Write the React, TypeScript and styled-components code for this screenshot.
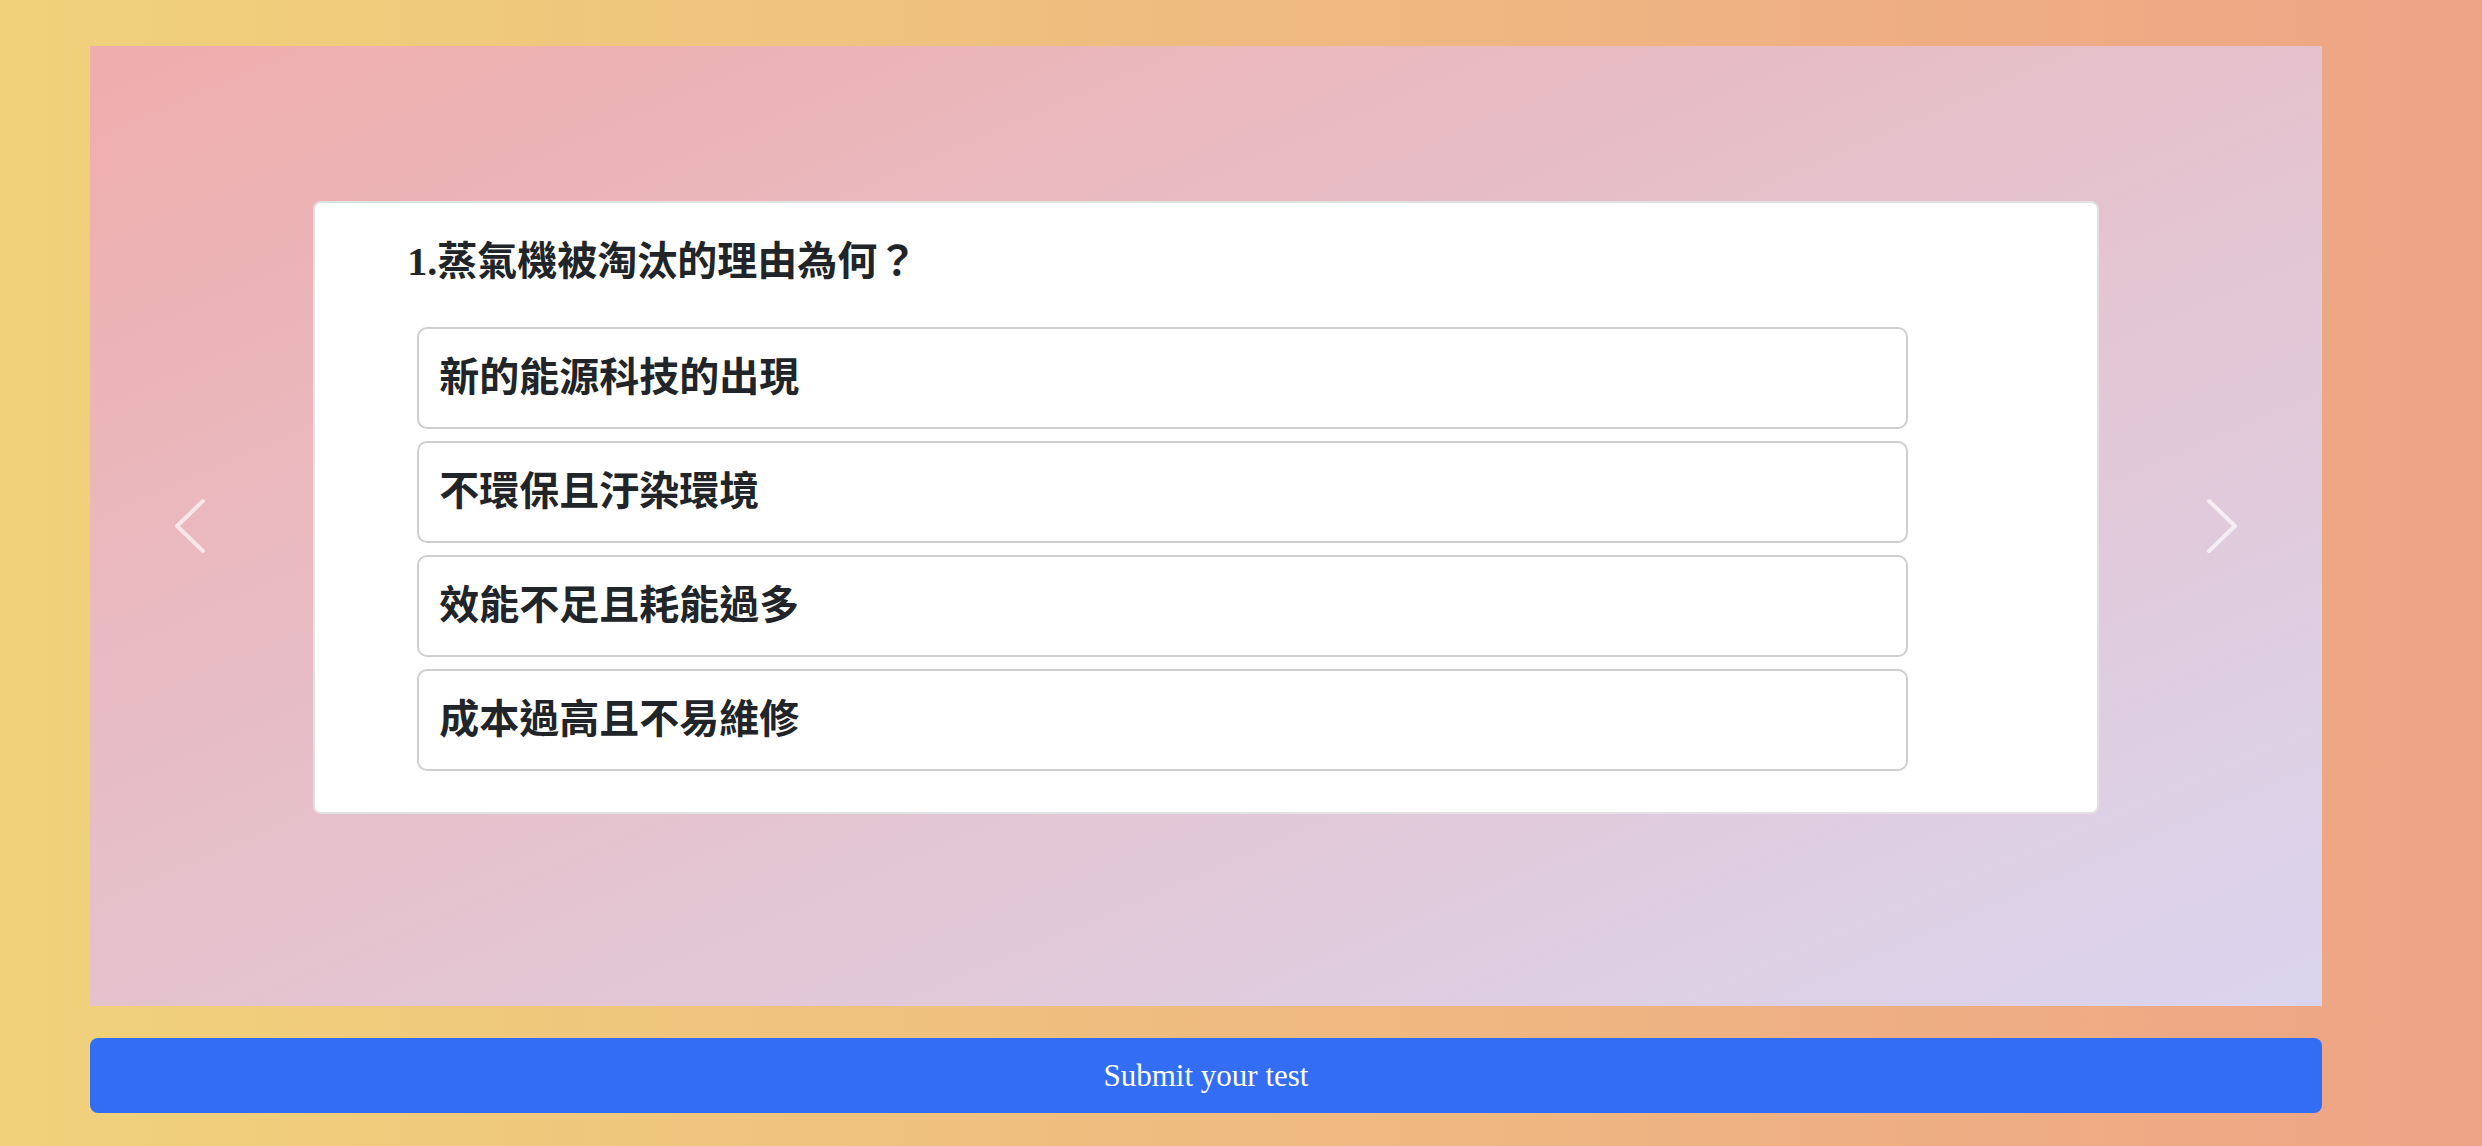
import React from "react";
import styled, { createGlobalStyle } from "styled-components";

const GlobalStyle = createGlobalStyle`
  html, body {
    margin: 0;
    padding: 0;
  }
  body {
    background: linear-gradient(to right, #f0d27a 0%, #eea486 100%);
    min-height: 100vh;
    font-family: "Liberation Serif", "Noto Sans CJK TC", serif;
  }
  * { box-sizing: border-box; }
`;

const Page = styled.div`
  display: flex;
  flex-direction: column;
  gap: 32px;
  padding: 46px 160px 33px 90px;
  min-height: 1146px;
`;

const Carousel = styled.section`
  position: relative;
  height: 960px;
  display: flex;
  justify-content: center;
  align-items: flex-start;
  padding-top: 155px;
  background: linear-gradient(to bottom right, #efadac 0%, #e5c2cd 50%, #dad5ee 100%);
`;

const Card = styled.div`
  width: 80%;
  background: #ffffff;
  border: 2px solid #e2e2e2;
  border-radius: 8px;
  padding: 35px 0 41px;
`;

const Question = styled.h2`
  margin: 0 0 41px;
  padding-left: 92px;
  font-family: "Liberation Serif", "Noto Sans CJK TC", serif;
  font-weight: 700;
  font-size: 40px;
  line-height: 48px;
  color: #212529;
`;

const Options = styled.ul`
  list-style: none;
  margin: 0 189px 0 102px;
  padding: 0;
  display: flex;
  flex-direction: column;
  gap: 12px;
`;

const Option = styled.li`
  height: 102px;
  display: flex;
  align-items: center;
  padding: 0 20px 8px;
  border: 2px solid #cfcfcf;
  border-radius: 10px;
  background: #ffffff;
  font-family: "Noto Sans CJK TC", "Noto Sans", sans-serif;
  font-weight: 700;
  font-size: 40px;
  color: #212529;
  cursor: pointer;
`;

const Control = styled.button<{ $side: "left" | "right" }>`
  position: absolute;
  top: 0;
  bottom: 0;
  ${(p) => (p.$side === "left" ? "left: 0;" : "right: 0;")}
  width: 200px;
  display: flex;
  align-items: center;
  justify-content: center;
  background: none;
  border: none;
  padding: 0;
  cursor: pointer;
`;

const SubmitButton = styled.button`
  height: 75px;
  width: 100%;
  border: none;
  border-radius: 8px;
  background: #336df3;
  color: #ffffff;
  font-family: "Liberation Serif", serif;
  font-size: 31px;
  cursor: pointer;
`;

const Chevron = ({ dir }: { dir: "left" | "right" }) => (
  <svg width="32" height="56" viewBox="0 0 32 56" fill="none">
    <polyline
      points={dir === "left" ? "29,3 3,28 29,53" : "3,3 29,28 3,53"}
      stroke="rgba(255,255,255,0.65)"
      strokeWidth="4"
      strokeLinecap="round"
      strokeLinejoin="round"
    />
  </svg>
);

const answers = [
  "新的能源科技的出現",
  "不環保且汙染環境",
  "效能不足且耗能過多",
  "成本過高且不易維修",
];

export default function App() {
  return (
    <>
      <GlobalStyle />
      <Page>
        <Carousel>
          <Card>
            <Question>1.蒸氣機被淘汰的理由為何？</Question>
            <Options>
              {answers.map((a) => (
                <Option key={a}>{a}</Option>
              ))}
            </Options>
          </Card>
          <Control $side="left" aria-label="Previous">
            <Chevron dir="left" />
          </Control>
          <Control $side="right" aria-label="Next">
            <Chevron dir="right" />
          </Control>
        </Carousel>
        <SubmitButton>Submit your test</SubmitButton>
      </Page>
    </>
  );
}
